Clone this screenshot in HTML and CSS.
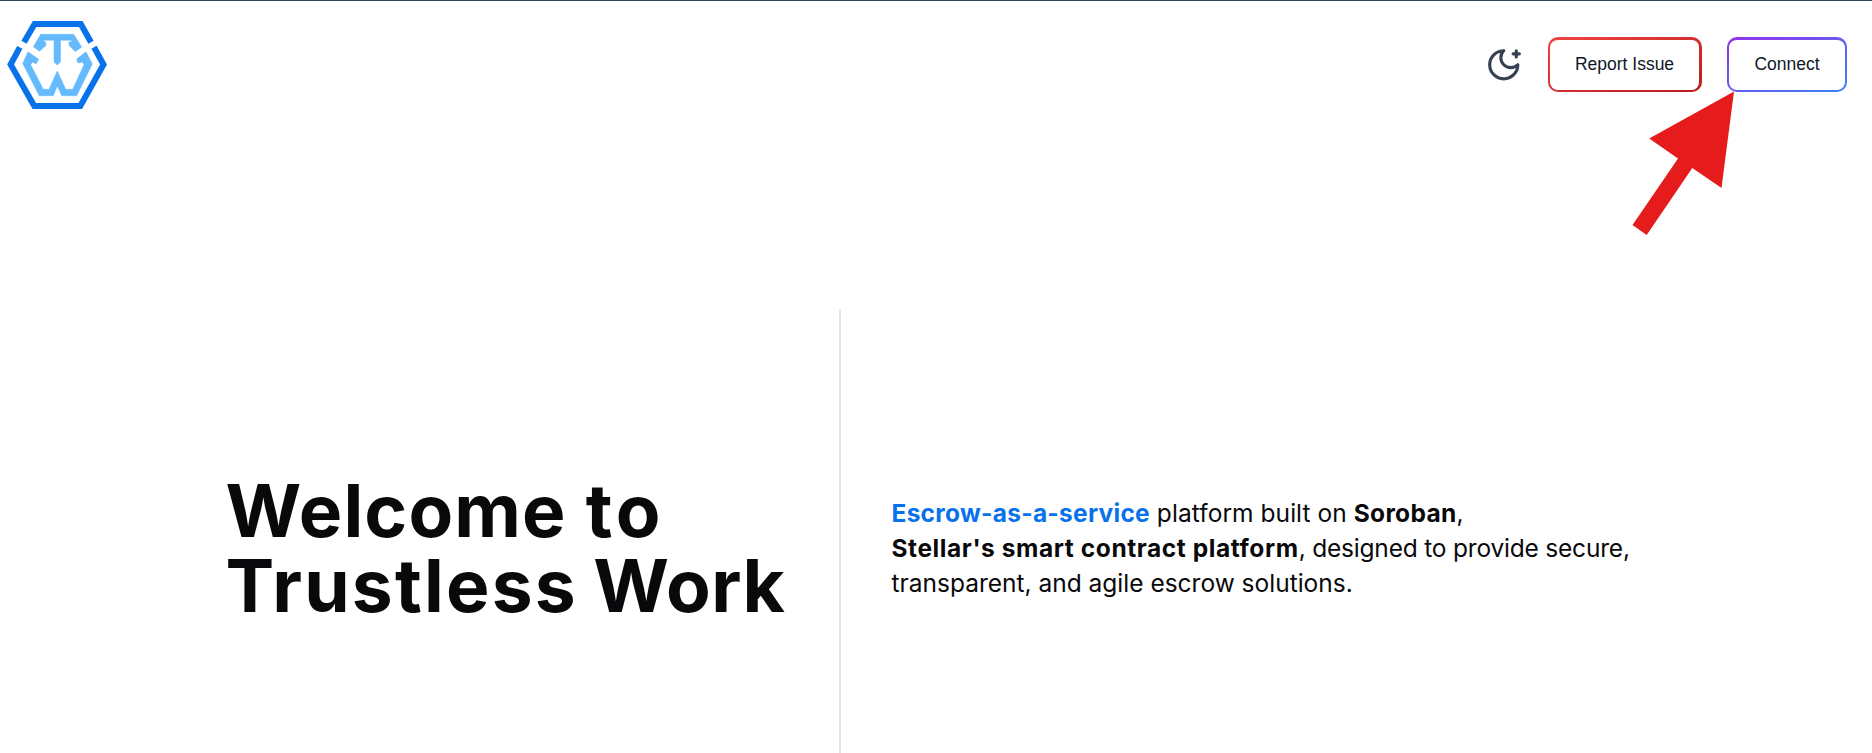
FILE: index.html
```html
<!DOCTYPE html>
<html lang="en">
<head>
<meta charset="utf-8">
<title>Trustless Work</title>
<link rel="stylesheet" href="styles.css">
</head>
<body>
<header class="header">
  <svg class="logo" width="100" height="90" viewBox="7 20 100 90" fill="none">
    <g stroke="#0872ea" stroke-width="6">
      <path d="M24 42.2 34.6 24H80.8L91 42.2"/>
      <path d="M19.8 47.3 10.6 64.5 34.3 106H80.3L103.6 64.5 94 47.3"/>
    </g>
    <g fill="#64bafc" stroke="#64bafc" stroke-width="0.5">
      <path d="M40.7 34.3 33.3 46.7 39.3 51.2 46 45.5 45.5 41.7 43 41.5 44.2 40.2H54V62L57.2 65 60.5 62V40.2H71L72 41.5 69 42 69 45.5 75.3 51.5 81.7 47 73.7 34.3Z"/>
      <path d="M28 51.7 22.7 63.5 39.3 95.7H53.3L57.3 86 61.7 95.7H76.7L92.3 64 86 51.7 76.7 59 77.7 62.7 82.7 62.3 84 64.7 72.7 89.3H65.7L57.3 71 49 89.3H43.3L30.7 64.7 32.7 62 36 64 38.7 59.3Z"/>
    </g>
  </svg>
  <nav class="actions">
    <svg class="moon" viewBox="0 0 24 24" fill="none" stroke="#374151" stroke-width="2" stroke-linecap="round" stroke-linejoin="round"><path d="M12 3a6 6 0 0 0 9 9 9 9 0 1 1-9-9"/><path d="M20 3v4M22 5h-4"/></svg>
    <button class="btn btn-report">Report Issue</button>
    <button class="btn btn-connect">Connect</button>
  </nav>
</header>
<svg class="arrow" width="110" height="150" viewBox="1630 88 110 150"><path fill="#e61c1c" d="M1734 91.5 1649.2 138.6 1678 158.5 1632.5 225 1646.7 235 1692.3 168 1721.5 188Z"/></svg>
<main class="hero">
  <h1 class="title"><span class="title-line"><span class="welcome">Welcome</span> <span class="to">to</span></span><span class="title-line"><span class="trustless">Trustless</span> <span class="work">Work</span></span></h1>
  <p class="intro"><strong class="accent">Escrow-as-a-service</strong><span class="lead"> platform built on </span><strong class="network">Soroban</strong>,<br><strong class="platform">Stellar's smart contract platform</strong><span class="purpose">, designed to provide secure,</span><br>transparent, and agile escrow solutions.</p>
</main>
</body>
</html>
```
FILE: styles.css
```css
* { box-sizing: border-box; }
body {
  margin: 0;
  height: 753px;
  overflow: hidden;
  display: flex;
  flex-direction: column;
  background: #fff;
  border-top: 1px solid #334155;
  color: #09090b;
  font-family: Inter, "Liberation Sans", sans-serif;
}
.header {
  height: 308px;
  flex: none;
  display: flex;
  justify-content: space-between;
  align-items: flex-start;
  padding: 19px 25px 0 7px;
}
.actions { display: flex; align-items: center; gap: 25px; margin-top: 17px; }
.moon { width: 37.5px; height: 37.5px; margin-right: 0.5px; }
.btn {
  height: 55px;
  padding: 0 0 2px;
  border: 2px solid transparent;
  border-top-width: 3px;
  border-radius: 10px;
  font: 17.5px "Liberation Sans", Arial, sans-serif;
  color: #0f172a;
}
.btn-report { width: 154px; border-right-width: 3px; background: linear-gradient(#fff, #fff) padding-box, linear-gradient(to bottom right, #ef4444, #b91c1c) border-box; }
.btn-connect { width: 120px; background: linear-gradient(#fff, #fff) padding-box, linear-gradient(to bottom right, #9333ea, #3b82f6) border-box; }
.arrow { position: absolute; left: 1630px; top: 88px; }
.hero { flex: 1; display: grid; grid-template-columns: 841px 1fr; }
.title {
  margin: 0;
  padding: 164px 0 0 225.5px;
  border-right: 2px solid #e4e4e7;
  font-size: 73px;
  line-height: 75px;
  font-weight: 700;
  letter-spacing: 1.58px;
  white-space: nowrap;
}
.title-line { display: block; }
.welcome { letter-spacing: 1.15px; }
.to { letter-spacing: 4px; }
.trustless { letter-spacing: 2.2px; margin-right: -3.5px; }
.work { letter-spacing: 0.5px; }
.intro {
  margin: 0;
  padding: 187px 0 0 50.5px;
  font-size: 24.5px;
  line-height: 35px;
  white-space: nowrap;
}
.intro strong { font-weight: 700; }
.intro .accent { color: #0872ea; letter-spacing: 0.26px; }
.lead { letter-spacing: 0.06px; }
.network { letter-spacing: 0.3px; }
.platform { letter-spacing: 0.58px; }
.purpose { letter-spacing: -0.2px; }
```
